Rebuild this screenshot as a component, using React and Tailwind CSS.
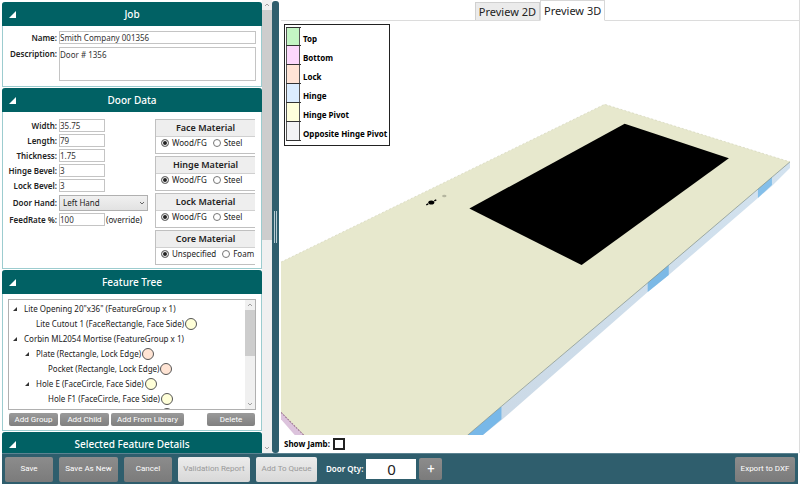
import { useState } from "react";
import clsx from "clsx";

const dimensions = [
  { id: "width", label: "Width:", value: "35.75" },
  { id: "length", label: "Length:", value: "79" },
  { id: "thickness", label: "Thickness:", value: "1.75" },
  { id: "hinge-bevel", label: "Hinge Bevel:", value: "3" },
  { id: "lock-bevel", label: "Lock Bevel:", value: "3" },
];

const materials = [
  { name: "Face Material", options: ["Wood/FG", "Steel"] },
  { name: "Hinge Material", options: ["Wood/FG", "Steel"] },
  { name: "Lock Material", options: ["Wood/FG", "Steel"] },
  { name: "Core Material", options: ["Unspecified", "Foam"] },
];

const features = [
  { text: 'Lite Opening 20"x36" (FeatureGroup x 1)', indent: "pl-1", open: true },
  { text: "Lite Cutout 1 (FaceRectangle, Face Side)", indent: "pl-4", color: "bg-[#ffffd8]" },
  { text: "Corbin ML2054 Mortise (FeatureGroup x 1)", indent: "pl-1", open: true },
  { text: "Plate (Rectangle, Lock Edge)", indent: "pl-4", open: true, color: "bg-[#ffe4d4]" },
  { text: "Pocket (Rectangle, Lock Edge)", indent: "pl-7", color: "bg-[#ffe4d4]" },
  { text: "Hole E (FaceCircle, Face Side)", indent: "pl-4", open: true, color: "bg-[#ffffd8]" },
  { text: "Hole F1 (FaceCircle, Face Side)", indent: "pl-7", color: "bg-[#ffffd8]" },
  { text: "", indent: "pl-[140px]", color: "bg-[#ffffd8]" },
];

const legend = [
  { name: "Top", color: "bg-[#c4f5c4]" },
  { name: "Bottom", color: "bg-[#fcd8fc]" },
  { name: "Lock", color: "bg-[#ffe4d6]" },
  { name: "Hinge", color: "bg-[#dcedff]" },
  { name: "Hinge Pivot", color: "bg-[#ffffdc]" },
  { name: "Opposite Hinge Pivot", color: "bg-[#f3f3f5]" },
];

const Triangle = ({ className }) => (
  <svg viewBox="0 0 8 8" className={className} aria-hidden="true">
    <path d="M8 0v8H0z" fill="currentColor" />
  </svg>
);

const Section = ({ title, children }) => (
  <section className="rounded-t-[3px] border-x border-b border-[#9ccccf] bg-white">
    <button className="-mx-px flex h-6 w-[calc(100%+2px)] items-center rounded-t-[3px] bg-[#016164] px-[7px] text-white">
      <Triangle className="size-[7px]" />
      <span className="flex-1 pr-[7px] text-center text-[10px] leading-4 font-medium">
        {title}
      </span>
    </button>
    {children}
  </section>
);

const Scrollbar = ({ thumb }) => (
  <div className="flex w-[10px] shrink-0 flex-col items-center bg-[#f0f0f0] text-[#a0a0a0]">
    <svg viewBox="0 0 10 10" className="size-[10px]" aria-hidden="true">
      <path d="M3 6l2-2 2 2" fill="none" stroke="currentColor" />
    </svg>
    <div className={clsx("w-full bg-[#cdcdcd]", thumb)} />
    <svg viewBox="0 0 10 10" className="mt-auto size-[10px]" aria-hidden="true">
      <path d="M3 4l2 2 2-2" fill="none" stroke="currentColor" />
    </svg>
  </div>
);

const labelStyle = "text-right font-semibold whitespace-nowrap leading-[13px]";
const inputStyle =
  "h-[13px] border border-[#c4c4c4] bg-white text-[8px] leading-[11px] text-[#333] outline-none";

const JobForm = () => (
  <div className="grid grid-cols-[50px_1fr] gap-x-[2px] gap-y-[3px] py-[5px] pr-[5px] pl-1">
    <label htmlFor="name" className={labelStyle}>
      Name:
    </label>
    <input id="name" defaultValue="Smith Company 001356" className={inputStyle} />
    <label htmlFor="description" className={labelStyle}>
      Description:
    </label>
    <textarea
      id="description"
      defaultValue="Door # 1356"
      className="h-[34px] resize-none border border-[#c4c4c4] text-[8px] leading-[13px] text-[#333] outline-none"
    />
  </div>
);

const MaterialGroup = ({ name, options }) => {
  const [selected, setSelected] = useState(options[0]);

  return (
    <fieldset className="flex h-[35px] flex-col border-y border-l border-[#c0c0c0]">
      <div className="flex h-[17px] items-center justify-center border-b border-[#d0d0d0] bg-[#eeeeee] text-[9px] leading-3 font-semibold">
        {name}
      </div>
      <div className="flex flex-1 items-center gap-[6px] pl-[5px]">
        {options.map((option) => (
          <label key={option} className="flex items-center gap-[3px] whitespace-nowrap leading-3">
            <input
              type="radio"
              name={name}
              checked={selected === option}
              onChange={() => setSelected(option)}
              className="size-2 appearance-none rounded-full border border-[#777] bg-white checked:bg-[#222] checked:shadow-[inset_0_0_0_1px_white]"
            />
            {option}
          </label>
        ))}
      </div>
    </fieldset>
  );
};

const DoorDataForm = () => (
  <div className="flex justify-between pt-[7px] pr-[6px] pb-[3px] pl-1">
    <div className="grid grid-cols-[50px_1fr] content-start items-center gap-x-[2px] gap-y-[2px]">
      {dimensions.map(({ id, label, value }) => (
        <div key={id} className="contents">
          <label htmlFor={id} className={labelStyle}>
            {label}
          </label>
          <input id={id} defaultValue={value} className={clsx(inputStyle, "w-[46px]")} />
        </div>
      ))}
      <label htmlFor="door-hand" className={labelStyle}>
        Door Hand:
      </label>
      <div className="relative mt-px">
        <select
          id="door-hand"
          className="block h-4 w-[89px] appearance-none border border-[#b0b0b0] bg-linear-to-b from-[#f0f0f0] to-[#e2e2e2] px-[3px] text-[8px] leading-[14px]"
        >
          <option>Left Hand</option>
          <option>Right Hand</option>
        </select>
        <svg viewBox="0 0 6 6" className="pointer-events-none absolute top-[5px] right-[3px] size-[6px]" aria-hidden="true">
          <path d="M1 2l2 2 2-2" fill="none" stroke="#666" />
        </svg>
      </div>
      <label htmlFor="feed-rate" className={labelStyle}>
        FeedRate %:
      </label>
      <div className="flex items-center gap-px">
        <input id="feed-rate" defaultValue="100" className={clsx(inputStyle, "w-[46px]")} />
        <span className="leading-[13px]">(override)</span>
      </div>
    </div>
    <div className="flex w-[100px] flex-col gap-[2px]">
      {materials.map((material) => (
        <MaterialGroup key={material.name} {...material} />
      ))}
    </div>
  </div>
);

const treeButton =
  "h-[13px] rounded-[2px] bg-linear-to-b from-[#9a9a9a] to-[#808080] text-center font-[Roboto] text-[8px] leading-[13px] text-white";

const FeatureTree = () => (
  <div className="flex flex-col gap-[3px] px-[5px] pt-[5px] pb-[4px]">
    <div className="flex h-[111px] border border-[#b0b0b0]">
      <ul className="min-w-0 flex-1 overflow-hidden pt-px">
        {features.map(({ text, indent, open, color }) => (
          <li key={text} className={clsx("flex h-[15px] items-center whitespace-nowrap", indent)}>
            <span className="w-[11px] shrink-0">
              {open && <Triangle className="size-[4px] text-[#333]" />}
            </span>
            {text}
            {color && (
              <span className={clsx("ml-px size-3 rounded-full border border-[#555]", color)} />
            )}
          </li>
        ))}
      </ul>
      <Scrollbar thumb="h-[46px]" />
    </div>
    <div className="flex gap-[2px] pl-px">
      <button className={clsx(treeButton, "w-[49px]")}>Add Group</button>
      <button className={clsx(treeButton, "w-[49px]")}>Add Child</button>
      <button className={clsx(treeButton, "w-[73px]")}>Add From Library</button>
      <button className={clsx(treeButton, "mr-px ml-auto w-12")}>Delete</button>
    </div>
  </div>
);

const Sidebar = () => (
  <aside className="flex w-[270px] shrink-0">
    <div className="flex min-w-0 flex-1 flex-col gap-px overflow-hidden pt-[2px]">
      <Section title="Job">
        <JobForm />
      </Section>
      <Section title="Door Data">
        <DoorDataForm />
      </Section>
      <Section title="Feature Tree">
        <FeatureTree />
      </Section>
      <Section title="Selected Feature Details" />
    </div>
    <Scrollbar thumb="h-[230px]" />
  </aside>
);

const DoorModel = () => (
  <svg
    viewBox="281 21 517 414"
    preserveAspectRatio="xMidYMid slice"
    className="h-full w-full"
    role="img"
    aria-label="Door model"
  >
    <defs>
      <linearGradient id="edge" x1="0" y1="1" x2="1" y2="0">
        <stop offset="0" stopColor="#cbd9e6" />
        <stop offset="1" stopColor="#d2e2ef" />
      </linearGradient>
    </defs>
    {/* Hinge edge */}
    <path d="M789 162L467 435H482L502 419 647 292 668 275 757 198 771 186 789 168z" fill="url(#edge)" />
    <path d="M757 187l14-12v10l-14 13z" fill="#84bfe9" />
    <path d="M647 280l21-17v12l-21 17z" fill="#7cb9e6" />
    <path d="M467 435l34-29v13l-19 16z" fill="#78b8e8" />
    {/* Bottom edge */}
    <path d="M281 411l24 24h-10l-14-16z" fill="#dcc3dc" />
    {/* Face */}
    <path d="M604 104.500L789 162 668 265 501 406 467 435H304L281 412V262z" fill="#e7e8cd" />
    <path d="M789 162L668 265 501 406 467 435" fill="none" stroke="#7d8c86" strokeWidth=".7" />
    <path d="M281 412l23 23" stroke="#99718f" strokeDasharray="2 1" />
    <path d="M281 262L604 104.500 789 162" fill="none" stroke="#cfd0b5" strokeWidth=".6" strokeDasharray="2 2" />
    {/* Lite cutout */}
    <path d="M624 124l104 34.500L581 265 469 208.500z" fill="#000" />
    {/* Lock bore */}
    <path d="M426 205l2-1M434 201l2-1" stroke="#000" strokeWidth="1.400" />
    <ellipse cx="431" cy="202.500" rx="3" ry="2" fill="#000" />
    <ellipse cx="444" cy="196" rx="2.200" ry="1.200" fill="#b5b6a0" />
  </svg>
);

const Legend = () => (
  <div className="absolute top-[3px] left-[3px] border border-[#222] bg-white pt-[2px] pr-[2px] pb-1 pl-px">
    <ul className="text-[8px] font-bold text-black">
      {legend.map(({ name, color }) => (
        <li key={name} className="group flex h-[19px] gap-[2px]">
          <span className="w-[15px] border-b border-[#333] group-first:border-t">
            <span className={clsx("block h-full w-[14px] border-x border-[#555]", color)} />
          </span>
          <span className="self-center pt-1 leading-[14px]">{name}</span>
        </li>
      ))}
    </ul>
  </div>
);

const Preview = () => (
  <main className="flex min-w-0 flex-1 flex-col border-r border-[#dcdcdc] pl-[2px]">
    <div className="flex h-[21px] items-end justify-center border-b border-[#dcdcdc]" role="tablist">
      <button
        role="tab"
        aria-selected="false"
        className="h-[18px] border border-b-0 border-[#d0d0d0] bg-[#ebebeb] px-[3px] text-[11px] leading-4"
      >
        Preview 2D
      </button>
      <button
        role="tab"
        aria-selected="true"
        className="-mb-px h-[21px] border border-[#d8d8d8] border-b-white bg-white px-[3px] text-[11px] leading-5"
      >
        Preview 3D
      </button>
    </div>
    <div className="relative min-h-0 flex-1">
      <DoorModel />
      <Legend />
    </div>
    <label className="flex h-[18px] items-center gap-[3px] pl-[3px] text-[8px] font-bold text-black">
      Show Jamb:
      <input type="checkbox" className="size-3 appearance-none border-2 border-[#222] bg-white checked:bg-[#222]" />
    </label>
  </main>
);

const footerButton =
  "h-[25px] rounded-[2px] bg-linear-to-b from-[#8c8c8c] to-[#7b7b7b] text-center font-[Roboto] text-[8px] text-white";
const disabledButton =
  "h-[25px] rounded-[2px] bg-linear-to-b from-[#ececec] to-[#d8d8d8] text-center font-[Roboto] text-[8px] text-[#999]";

const Footer = () => {
  const [quantity, setQuantity] = useState(0);

  return (
    <footer className="mr-[2px] flex h-[31px] shrink-0 items-center gap-[6px] border-t border-[#5c8391] bg-[#2f5e6d] px-[3px]">
      <button className={clsx(footerButton, "w-12")}>Save</button>
      <button className={clsx(footerButton, "w-[59px]")}>Save As New</button>
      <button className={clsx(footerButton, "w-12")}>Cancel</button>
      <button disabled className={clsx(disabledButton, "w-[72px]")}>
        Validation Report
      </button>
      <button disabled className={clsx(disabledButton, "w-[61px]")}>
        Add To Queue
      </button>
      <div className="flex items-center gap-[3px] pl-[3px]">
        <label htmlFor="quantity" className="text-[8px] font-semibold text-white">
          Door Qty:
        </label>
        <input
          id="quantity"
          value={quantity}
          onChange={(e) => setQuantity(Number(e.target.value) || 0)}
          className="h-5 w-[50px] bg-white text-center text-[15px] leading-5 text-[#222] outline-none"
        />
        <button
          onClick={() => setQuantity(quantity + 1)}
          className="h-[22px] w-[23px] rounded-[2px] bg-linear-to-b from-[#8c8c8c] to-[#7b7b7b] font-[Roboto] text-[13px] leading-5 text-white"
        >
          +
        </button>
      </div>
      <button className={clsx(footerButton, "ml-auto w-[60px]")}>Export to DXF</button>
    </footer>
  );
};

const App = () => {
  return (
    <div className="flex h-screen flex-col bg-white pl-[2px] font-['Noto_Sans',sans-serif] text-[8px] text-[#222]">
      <div className="flex min-h-0 flex-1">
        <Sidebar />
        <div className="mt-px flex w-[7px] shrink-0 items-center justify-center gap-px rounded-[3px] bg-[#2f5e6d]">
          <span className="h-8 w-px bg-[#b9ccd3]" />
          <span className="h-8 w-px bg-[#b9ccd3]" />
        </div>
        <Preview />
      </div>
      <Footer />
    </div>
  );
};

export default App;
